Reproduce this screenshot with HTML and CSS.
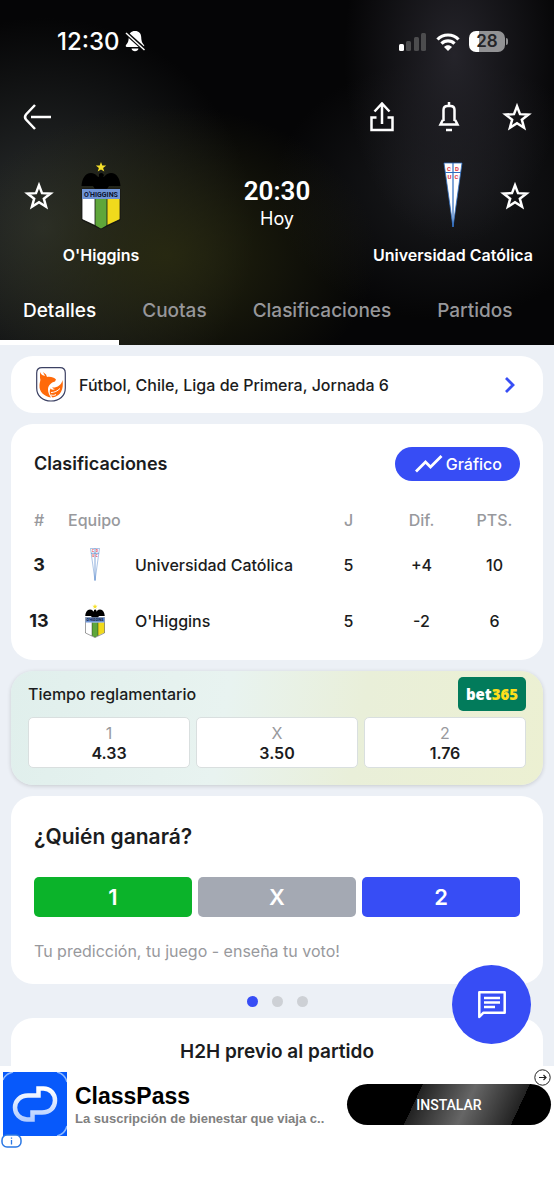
FILE: index.html
```html
<!DOCTYPE html>
<html lang="es">
<head>
  <meta charset="UTF-8">
  <meta name="viewport" content="width=device-width, initial-scale=1.0">
  <title>O'Higgins - Universidad Católica</title>
  <link rel="stylesheet" href="styles.css">
</head>
<body>
  <svg class="sprite" width="0" height="0" aria-hidden="true">
    <symbol id="star" viewBox="0 0 28 28">
      <path d="M14 4l2.800 7.300 7.900.4-6.200 4.800 2.100 7.500L14 19.800l-6.600 4.200 2.100-7.500-6.200-4.800 7.900-.4z" fill="none" stroke="#fff" stroke-width="2.300"/>
    </symbol>
  </svg>

  <header class="header">
    <div class="status">
      <div class="status-side">
        <span class="clock">12:30</span>
        <svg width="20" height="21" viewBox="0 0 20 21">
          <path d="M10 0c4 0 6 2.500 6.200 6 .2 4.500 1 6 2.800 8 .6.900.2 2-.8 2H1.800c-1 0-1.400-1.100-.8-2 1.800-2 2.600-3.500 2.800-8C4 2.500 6 0 10 0zM6.500 17.500h7c-.5 3.500-6.500 3.500-7 0z" fill="#fff"/>
          <path d="M0 1l20 18" stroke="#080808" stroke-width="4"/>
          <path d="M1 2l18.500 17" stroke="#fff" stroke-width="1.500"/>
        </svg>
      </div>
      <div class="status-side status-right">
        <svg width="28" height="18" viewBox="0 0 28 18">
          <rect x="0" y="11" width="5" height="7" rx="1.500" fill="#fff"/>
          <rect x="7" y="8" width="5" height="10" rx="1.500" fill="#4c4c4e"/>
          <rect x="15" y="4" width="5" height="14" rx="1.500" fill="#4c4c4e"/>
          <rect x="22" y="0" width="5" height="18" rx="1.500" fill="#4c4c4e"/>
        </svg>
        <svg width="24" height="18" viewBox="0 0 24 18">
          <path d="M1.500 6.500C7 .500 17 .500 22.500 6.500M5.500 10.700c3.600-3.700 9.400-3.700 13 0" fill="none" stroke="#fff" stroke-width="3.200"/>
          <path d="M8 14c2.300-2.200 5.700-2.200 8 0l-4 4z" fill="#fff"/>
        </svg>
        <span class="battery"><span class="battery-level">28</span></span>
      </div>
    </div>

    <nav class="toolbar">
      <button class="icon-btn" aria-label="Volver">
        <svg width="30" height="28" viewBox="0 0 30 28" fill="none" stroke="#fff" stroke-width="2.500"><path d="M13 2L4 11.500q-2 2.500 0 5L13 26"/><path d="M9 14h20"/></svg>
      </button>
      <div class="toolbar-actions">
        <button class="icon-btn" aria-label="Compartir">
          <svg width="28" height="30" viewBox="0 0 28 30" fill="none" stroke="#fff" stroke-width="2.500"><path d="M8.500 15.500h-5V28h21V15.500h-5M14 22V2M6.500 9.500L14 1.500l7.500 8"/></svg>
        </button>
        <button class="icon-btn" aria-label="Notificaciones">
          <svg width="28" height="30" viewBox="0 0 28 30" fill="none" stroke="#fff" stroke-width="2.500"><path d="M14 0v4M8.500 19V8c0-2.500 1.500-4 4-4h3c2.500 0 4 1.500 4 4v11"/><path d="M7.800 18L5.500 22.500h17L20.200 18"/><path d="M11 28h6"/></svg>
        </button>
        <button class="icon-btn" aria-label="Favorito"><svg width="30" height="30"><use href="#star"/></svg></button>
      </div>
    </nav>

    <section class="match">
      <div class="team">
        <div class="team-row">
          <button class="icon-btn" aria-label="Seguir a O'Higgins"><svg width="30" height="30"><use href="#star"/></svg></button>
          <svg class="crest" width="40" height="68" viewBox="0 0 40 68">
            <g id="ohiggins">
              <path d="M20 0l1.300 3.600h3.900l-3.100 2.300 1.200 3.700-3.300-2.200-3.300 2.200 1.200-3.700-3.100-2.300h3.900z" fill="#f5e02a"/>
              <path d="M18 12c2-2 4-1 5 1l-1 2c2 0 3-4 8-4 6 0 9 6 9.500 13H28l-2 3H14l-2-3H.5C1 17 4 11 10 11c5 0 6 4 8 4z" fill="#000"/>
              <path d="M1 37h13v26L1 57z" fill="#fff"/>
              <path d="M14 37h12v26l-6 4-6-4z" fill="#5fa63a"/>
              <path d="M26 37h13v20l-13 6z" fill="#f1da1c"/>
              <path d="M1 27h38v31l-19 9-19-9zM14 37v27M26 37v27" fill="none" stroke="#111" stroke-width=".8"/>
              <path d="M1 27h38v10H1z" fill="#6f94d6"/>
              <text x="20" y="34.500" text-anchor="middle" font-family="Roboto, sans-serif" font-size="7" font-weight="700" fill="#0b1430">O'HIGGINS</text>
            </g>
          </svg>
        </div>
        <div class="team-name">O'Higgins</div>
      </div>
      <div class="kickoff">
        <div class="kickoff-time">20:30</div>
        <div class="kickoff-day">Hoy</div>
      </div>
      <div class="team">
        <div class="team-row">
          <svg class="crest" width="40" height="68" viewBox="0 0 40 68">
            <g id="catolica">
              <path d="M11 1h18l-9 64z" fill="#fff" stroke="#2f6dc0" stroke-width=".8"/>
              <path d="M20 1v64M12 10.500h16" stroke="#2f6dc0" stroke-width="1.200"/>
              <g font-family="Roboto, sans-serif" font-size="6" font-weight="700" fill="#e0313f" text-anchor="middle">
                <text x="16" y="8.500">C</text><text x="24" y="8.500">D</text>
                <text x="16.500" y="17">U</text><text x="23.500" y="17">C</text>
              </g>
            </g>
          </svg>
          <button class="icon-btn" aria-label="Seguir a Universidad Católica"><svg width="30" height="30"><use href="#star"/></svg></button>
        </div>
        <div class="team-name">Universidad Católica</div>
      </div>
    </section>

    <nav class="tabs">
      <a href="#detalles" class="tab active">Detalles</a>
      <a href="#cuotas" class="tab">Cuotas</a>
      <a href="#clasificaciones" class="tab">Clasificaciones</a>
      <a href="#partidos" class="tab">Partidos</a>
    </nav>
  </header>

  <main class="content">
    <a href="#liga" class="card league">
      <svg width="30" height="35" viewBox="0 0 30 35">
        <path d="M6 .7h18c3.500 0 5.300 2 5.300 5.300v15c0 8-6 13-14.300 13S.7 29 .7 21V6C.7 2.700 2.500.7 6 .7z" fill="#fff" stroke="#3c4163" stroke-width="1.200"/>
        <path d="M4 5c1 3 3 3.500 5 4L7 5l3 2.500L11 10c4-.5 7 .5 9 2.500l-1 2c-4 1-7 4-7 8 0 3 1 5 3 8-7-1-12-6-11.500-12 .2-4 1.500-5 .5-7.500z" fill="#ff6a0a"/>
        <path d="M26.500 13c1.500 9-2 16.500-10 17.500-3-3-3.500-6-2-9 1.500 1.500 3 1.500 4.500.5-1 0-2-.5-3-1.500 5 .5 9.500-2.500 10.500-7.500z" fill="#ff6a0a"/>
        <path d="M15 25.500c3.500 0 6.500-1.500 9-4M15 28c2 .5 3.500.5 5-.5" stroke="#fff" stroke-width="1" fill="none"/>
      </svg>
      <span class="league-name">Fútbol, Chile, Liga de Primera, Jornada 6</span>
      <svg width="12" height="18" viewBox="0 0 12 18"><path d="M2 2l7 7-7 7" fill="none" stroke="#374df5" stroke-width="2.800"/></svg>
    </a>

    <section class="card standings">
      <div class="standings-head">
        <h2>Clasificaciones</h2>
        <button class="chart-btn">
          <svg width="28" height="20" viewBox="0 0 28 20"><path d="M1 17.500l9.500-9.500 5 5L26.500 2" fill="none" stroke="#fff" stroke-width="2.800"/></svg>
          Gráfico
        </button>
      </div>
      <table>
        <colgroup>
          <col class="col-pos">
          <col class="col-badge">
          <col>
          <col class="col-num">
          <col class="col-num">
          <col class="col-num">
        </colgroup>
        <thead>
          <tr>
            <th>#</th>
            <th class="team-head" colspan="2">Equipo</th>
            <th>J</th>
            <th>Dif.</th>
            <th>PTS.</th>
          </tr>
        </thead>
        <tbody>
          <tr>
            <td class="pos">3</td>
            <td class="badge"><svg width="22" height="34" viewBox="0 0 40 68"><use href="#catolica"/></svg></td>
            <td class="name">Universidad Católica</td>
            <td>5</td>
            <td>+4</td>
            <td>10</td>
          </tr>
          <tr>
            <td class="pos">13</td>
            <td class="badge"><svg width="22" height="34" viewBox="0 0 40 68"><use href="#ohiggins"/></svg></td>
            <td class="name">O'Higgins</td>
            <td>5</td>
            <td>-2</td>
            <td>6</td>
          </tr>
        </tbody>
      </table>
    </section>

    <section class="card odds">
      <div class="odds-head">
        <span>Tiempo reglamentario</span>
        <a href="#bet365" class="bookmaker">bet<span>365</span></a>
      </div>
      <div class="trio">
        <button class="odd"><span>1</span><b>4.33</b></button>
        <button class="odd"><span>X</span><b>3.50</b></button>
        <button class="odd"><span>2</span><b>1.76</b></button>
      </div>
    </section>

    <section class="card vote">
      <h2>¿Quién ganará?</h2>
      <div class="trio">
        <button class="vote-btn home">1</button>
        <button class="vote-btn draw">X</button>
        <button class="vote-btn away">2</button>
      </div>
      <p>Tu predicción, tu juego - enseña tu voto!</p>
    </section>

    <div class="dots">
      <span class="dot active"></span>
      <span class="dot"></span>
      <span class="dot"></span>
    </div>

    <section class="card h2h">
      <h2>H2H previo al partido</h2>
    </section>
  </main>

  <button class="chat" aria-label="Chat">
    <svg width="30" height="30" viewBox="0 0 30 30" fill="none" stroke="#fff" stroke-width="2.500"><path d="M2.300 27V2.300h25.400v20.400H6.500z" stroke-linejoin="round"/><path d="M7 8h16M7 12.500h16M7 17h11"/></svg>
  </button>

  <footer class="ad">
    <div class="ad-logo">
      <svg width="64" height="64" viewBox="0 0 64 64">
        <defs>
          <linearGradient id="cp" x1="0" y1="0" x2="0" y2="1"><stop offset="0" stop-color="#fff"/><stop offset="1" stop-color="#b4cdff"/></linearGradient>
        </defs>
        <rect width="64" height="64" fill="#0759fb"/>
        <path d="M0 8Q2 2 10 0M54 0Q62 2 64 10M64 54Q62 62 54 64" fill="none" stroke="#8fbaff" stroke-width="1.500"/>
        <path d="M33 23.500H25c-8 0-13 5.500-13 12s5 12 12 12h5.500v-7H39c8 0 13-5 13-12s-5-12-11.500-12H35.500v7z" fill="none" stroke="url(#cp)" stroke-width="4.500"/>
      </svg>
      <svg class="ad-info" width="21" height="14" viewBox="0 0 21 14">
        <rect x="1" y="1" width="19" height="12" rx="5" fill="#fff" stroke="#2b78e4" stroke-width="1.500"/>
        <path d="M10.500 6v4.500M10.500 3.500v1.300" stroke="#2b78e4" stroke-width="1.300"/>
      </svg>
    </div>
    <div class="ad-text">
      <div class="ad-title">ClassPass</div>
      <div class="ad-desc">La suscripción de bienestar que viaja c..</div>
    </div>
    <button class="install">INSTALAR</button>
    <svg class="ad-open" width="17" height="17" viewBox="0 0 17 17">
      <circle cx="8.500" cy="8.500" r="7.700" fill="#fff" stroke="#222" stroke-width="1"/>
      <path d="M5 8.500h7M9.500 6l2.500 2.500L9.500 11" fill="none" stroke="#222" stroke-width="1.200"/>
    </svg>
  </footer>
</body>
</html>
```

FILE: styles.css
```css
* {
  box-sizing: border-box;
}
body {
  margin: 0;
  background-color: #ecf0f6;
  color: #1b1c20;
  font-family: Inter, Roboto, sans-serif;
  font-size: 16px;
  line-height: 24px;
}
h2, p {
  margin: 0;
}
h2 {
  font-size: 18px;
  font-weight: 600;
}
button {
  font-family: inherit;
  border: none;
  cursor: pointer;
}
a {
  color: inherit;
  text-decoration: none;
}
svg {
  display: block;
  flex-shrink: 0;
}
.sprite {
  position: absolute;
}

/* header */
.header {
  background:
    radial-gradient(ellipse 110px 190px at 82% 16%, rgba(40, 39, 46, 0.9), transparent),
    radial-gradient(ellipse 210px 150px at 30% 74%, rgba(42, 43, 16, 0.85), transparent),
    radial-gradient(ellipse 210px 210px at 8% 66%, rgba(46, 50, 50, 0.95), transparent),
    radial-gradient(ellipse 170px 130px at 80% 55%, rgba(27, 28, 31, 0.9), transparent),
    #050506;
  color: #fff;
}
.status {
  display: flex;
  justify-content: space-between;
  align-items: center;
  padding: 0 46px 0 57px;
  height: 83px;
}
.status-side {
  display: flex;
  align-items: center;
  gap: 5px;
}
.status-right {
  gap: 9px;
}
.clock {
  font-size: 24px;
  font-weight: 500;
}
.battery {
  display: flex;
  align-items: center;
}
.battery::after {
  content: "";
  width: 2px;
  height: 7px;
  margin-left: 1px;
  border-radius: 0 2px 2px 0;
  background-color: #8e8e90;
}
.battery-level {
  width: 36px;
  height: 21px;
  border-radius: 7px;
  background: linear-gradient(90deg, #fff 28%, #929294 28%);
  color: #242427;
  font-size: 17px;
  font-weight: 600;
  line-height: 21px;
  text-align: center;
}
.icon-btn {
  display: flex;
  padding: 0;
  background: none;
}
.toolbar, .toolbar-actions {
  display: flex;
  align-items: center;
  justify-content: space-between;
}
.toolbar {
  height: 68px;
  padding: 0 22px;
}
.toolbar-actions {
  gap: 39px;
}
.match {
  display: grid;
  grid-template-columns: 1fr 150px 1fr;
  padding-top: 11px;
  text-align: center;
}
.team-row {
  display: grid;
  grid-template-columns: 1fr 46px 1fr;
  align-items: center;
  justify-items: center;
}
.crest {
  grid-column: 2;
}
.team-name {
  margin-top: 13px;
  font-weight: 600;
  white-space: nowrap;
}
.kickoff {
  padding-top: 14px;
}
.kickoff-time {
  font-family: Roboto, sans-serif;
  font-size: 26px;
  font-weight: 600;
  line-height: 30px;
}
.kickoff-day {
  font-size: 18px;
  line-height: 26px;
}
.tabs {
  display: flex;
  margin-top: 11px;
}
.tab {
  height: 67px;
  padding: 21px 23px 0;
  border-bottom: 5px solid transparent;
  color: #97979a;
  font-size: 19px;
  font-weight: 500;
}
.tab.active {
  border-color: #fff;
  color: #fff;
}

/* cards */
.content {
  padding: 11px 11px 0;
}
.card {
  display: block;
  margin-bottom: 11px;
  border-radius: 22px;
  background-color: #fff;
}
.league {
  display: flex;
  align-items: center;
  gap: 13px;
  height: 57px;
  padding: 0 27px 0 25px;
}
.league-name {
  flex: 1;
  font-weight: 500;
}
.standings {
  padding-bottom: 11px;
}
.standings-head {
  display: flex;
  align-items: center;
  justify-content: space-between;
  padding: 23px 23px 22px;
}
.chart-btn {
  display: flex;
  align-items: center;
  gap: 3px;
  height: 34px;
  padding: 0 18px 0 20px;
  border-radius: 17px;
  background-color: #374df5;
  color: #fff;
  font-size: 16px;
  font-weight: 500;
}
table {
  width: 100%;
  padding: 0 12px;
  border-spacing: 0;
  table-layout: fixed;
}
th, td {
  padding: 0;
  font-weight: 500;
  text-align: center;
}
th {
  height: 34px;
  color: #98999d;
}
td {
  height: 56px;
}
.col-pos {
  width: 32px;
}
.col-badge {
  width: 80px;
}
.col-num {
  width: 73px;
}
.team-head {
  padding-left: 13px;
  text-align: left;
}
.pos {
  font-size: 18px;
  font-weight: 700;
}
.badge svg {
  margin: 0 auto;
}
.name {
  text-align: left;
  white-space: nowrap;
}

/* odds */
.odds {
  padding: 6px 17px 17px;
  background: linear-gradient(100deg, #e0efec 0%, #e8f3f0 40%, #e9efd9 65%, #ecf0d2 100%);
  box-shadow: 0 1px 4px rgba(0, 0, 0, 0.16);
}
.odds-head {
  display: flex;
  align-items: center;
  justify-content: space-between;
  margin-bottom: 6px;
  font-weight: 500;
}
.bookmaker {
  width: 68px;
  height: 34px;
  border-radius: 5px;
  background-color: #027b5b;
  color: #fff;
  font-family: "Open Sans", sans-serif;
  font-size: 15px;
  font-weight: 800;
  line-height: 34px;
  text-align: center;
}
.bookmaker span {
  color: #ffdf1b;
}
.trio {
  display: grid;
  grid-template-columns: repeat(3, 1fr);
  gap: 6px;
}
.odd {
  display: flex;
  flex-direction: column;
  align-items: center;
  justify-content: center;
  height: 51px;
  padding: 0;
  border: 1px solid #d9dfdf;
  border-radius: 5px;
  background-color: #fff;
  color: #1b1c20;
  font-size: 16px;
  line-height: 20px;
}
.odd span {
  color: #98999d;
}
.odd b {
  font-weight: 600;
}

/* vote */
.vote {
  margin-bottom: 0;
  padding: 27px 23px 21px;
}
.vote h2 {
  margin-bottom: 26px;
  font-size: 21px;
  line-height: 28px;
}
.vote-btn {
  height: 40px;
  border-radius: 5px;
  color: #fff;
  font-size: 22px;
  font-weight: 600;
}
.home {
  background-color: #0bb32a;
}
.draw {
  background-color: #a4a9b3;
}
.away {
  background-color: #374df5;
}
.vote p {
  margin-top: 22px;
  color: #98999d;
}
.dots {
  display: flex;
  align-items: center;
  justify-content: center;
  gap: 14px;
  height: 34px;
}
.dot {
  width: 11px;
  height: 11px;
  border-radius: 50%;
  background-color: #cdd0d5;
}
.dot.active {
  background-color: #374df5;
}
.h2h {
  margin-bottom: 0;
  padding: 22px 0 24px;
  border-radius: 22px 22px 0 0;
  text-align: center;
}
.h2h h2 {
  font-size: 19px;
}
.chat {
  position: fixed;
  right: 23px;
  bottom: 156px;
  display: flex;
  align-items: center;
  justify-content: center;
  width: 79px;
  height: 79px;
  padding: 0;
  border-radius: 50%;
  background-color: #374df5;
}

/* ad banner */
.ad {
  position: fixed;
  left: 0;
  right: 0;
  bottom: 0;
  display: flex;
  align-items: flex-start;
  height: 134px;
  padding: 6px 3px;
  background-color: #fff;
  font-family: "Liberation Sans", Arial, sans-serif;
}
.ad-logo {
  position: relative;
}
.ad-info {
  position: absolute;
  left: -2px;
  bottom: -12px;
}
.ad-text {
  flex: 1;
  padding: 12px 0 0 8px;
  font-weight: 700;
  white-space: nowrap;
}
.ad-title {
  color: #000;
  font-size: 23px;
}
.ad-desc {
  color: #808080;
  font-size: 13px;
  line-height: 22px;
}
.install {
  width: 204px;
  height: 41px;
  margin-top: 12px;
  border-radius: 21px;
  background: linear-gradient(115deg, #000 34%, #222 34%, #666 58%, #222 82%, #000 82%);
  color: #fff;
  font-family: Roboto, sans-serif;
  font-size: 14px;
  font-weight: 500;
}
.ad-open {
  position: absolute;
  right: 3px;
  top: 3px;
}
```
